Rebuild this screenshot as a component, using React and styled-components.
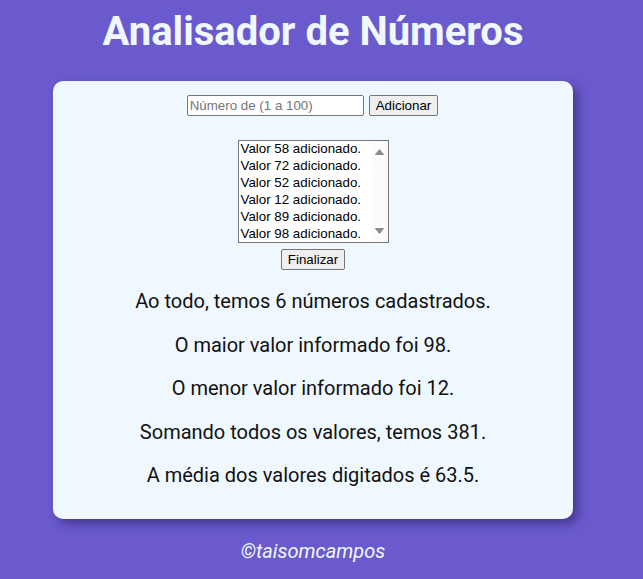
import styled, { createGlobalStyle } from "styled-components";

const Global = createGlobalStyle`
  html, body {
    margin: 0;
    padding: 0;
    background: #6a5acd;
    font-family: Roboto, "Liberation Sans", Arial, sans-serif;
  }
`;

const Page = styled.div`
  width: 626px;
  display: flex;
  flex-direction: column;
  align-items: center;
  padding-top: 8px;
`;

const Title = styled.h1`
  margin: 0 0 26px;
  font-size: 40px;
  font-weight: 700;
  color: #f0f8ff;
  text-align: center;
  line-height: normal;
`;

const Card = styled.section`
  width: 520px;
  box-sizing: border-box;
  background: #f0f8ff;
  border-radius: 10px;
  box-shadow: 5px 5px 10px rgba(40, 30, 100, 0.55);
  padding: 14px 20px 11px;
  display: flex;
  flex-direction: column;
  align-items: center;
`;

const Form = styled.div`
  display: flex;
  align-items: center;
  gap: 5px;
  margin-left: -1px;
`;

const NumberInput = styled.input`
  width: 177px;
  height: 21px;
  box-sizing: border-box;
  font-family: "Liberation Sans", Arial, sans-serif;
  font-size: 13.33px;
  padding: 1px 2px;
  border: 1px solid #767676;
  border-radius: 2px;
  &::placeholder {
    color: #757575;
  }
`;

const Button = styled.button`
  font-family: "Liberation Sans", Arial, sans-serif;
  font-size: 13.33px;
  height: 21px;
  padding: 1px 6px;
  border: 1px solid #767676;
  border-radius: 2px;
  background: #efefef;
  color: #000;
  margin-top: ${(p) => p.$top || 0}px;
`;

const ListBox = styled.div`
  position: relative;
  margin-top: 24px;
  width: 151px;
  height: 103px;
`;

const List = styled.select`
  width: 100%;
  height: 100%;
  box-sizing: border-box;
  font-family: "Liberation Sans", Arial, sans-serif;
  font-size: 13.33px;
  border: 1px solid #767676;
  border-radius: 0;
  background: #fff;
  color: #000;
  outline: none;
  padding-right: 16px;
  option {
    padding: 0 2px 1px;
  }
`;

const ScrollTrack = styled.div`
  position: absolute;
  top: 1px;
  right: 1px;
  bottom: 1px;
  width: 16px;
  background: #fbfbfb;
  display: flex;
  flex-direction: column;
  justify-content: space-between;
  align-items: center;
  padding: 8px 0;
  box-sizing: border-box;
  pointer-events: none;
`;

const Arrow = ({ down }) => (
  <svg width="9" height="6" viewBox="0 0 9 6">
    <path
      d={down ? "M0.5 0.5 H8.5 L4.5 5.5 Z" : "M4.5 0.5 L8.5 5.5 H0.5 Z"}
      fill="#8c8c8c"
      stroke="#8c8c8c"
      strokeLinejoin="round"
    />
  </svg>
);

const Result = styled.p`
  margin: 20px 0 0;
  font-size: 20px;
  line-height: 23.6px;
  color: #111;
  text-align: center;
  &:last-child {
    margin-bottom: 20px;
  }
`;

const Footer = styled.footer`
  margin-top: 20px;
  font-size: 20px;
  font-style: italic;
  color: #f0f8ff;
`;

const values = [58, 72, 52, 12, 89, 98];

export default function App() {
  const total = values.reduce((a, b) => a + b, 0);
  return (
    <Page>
      <Global />
      <Title>Analisador de Números</Title>
      <Card>
        <Form>
          <NumberInput type="number" placeholder="Número de (1 a 100)" />
          <Button>Adicionar</Button>
        </Form>
        <ListBox>
          <List size={10} defaultValue={[]} multiple>
            {values.map((v) => (
              <option key={v}>Valor {v} adicionado.</option>
            ))}
          </List>
          <ScrollTrack>
            <Arrow />
            <Arrow down />
          </ScrollTrack>
        </ListBox>
        <Button $top={6}>Finalizar</Button>
        <Result>Ao todo, temos {values.length} números cadastrados.</Result>
        <Result>O maior valor informado foi {Math.max(...values)}.</Result>
        <Result>O menor valor informado foi {Math.min(...values)}.</Result>
        <Result>Somando todos os valores, temos {total}.</Result>
        <Result>A média dos valores digitados é {total / values.length}.</Result>
      </Card>
      <Footer>©taisomcampos</Footer>
    </Page>
  );
}
